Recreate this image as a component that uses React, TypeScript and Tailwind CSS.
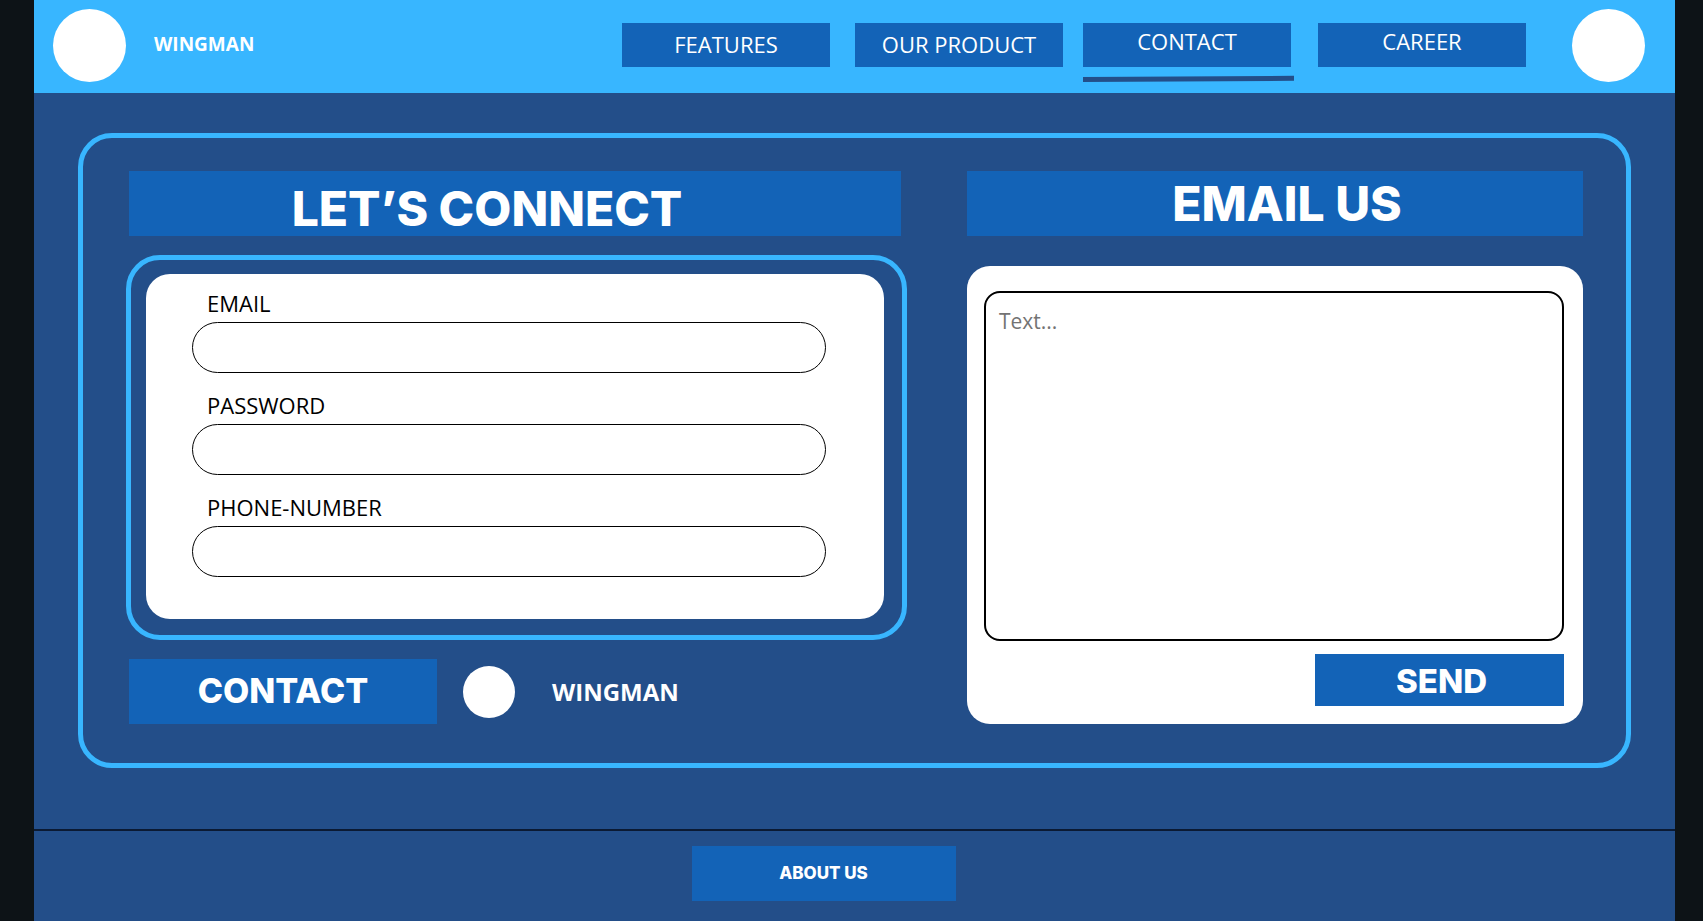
const navItem =
  "flex h-11 w-[208px] items-center justify-center bg-[#1363b7] text-[22px] leading-none text-white";
const fieldInput =
  "block h-[51px] w-full rounded-full border border-black bg-white px-5 text-[22px] text-black outline-none";
const fieldLabel = "mb-[7px] block pl-[15px] text-[22px] leading-6 text-black";
const heading = "font-['Inter',sans-serif] font-extrabold text-white";

function Header() {
  return (
    <header className="flex h-[93px] items-center bg-[#38b6ff] pr-[30px] pb-0.5 pl-[19px]">
      <span className="size-[73px] shrink-0 rounded-full bg-white" />
      <span className="ml-7 pb-0.5 text-[19px] leading-none font-bold text-white">WINGMAN</span>
      <nav aria-label="Main" className="ml-auto flex pb-px">
        <a href="#features" className={`${navItem} pb-0.5`}>
          FEATURES
        </a>
        <a href="#product" className={`${navItem} ml-[25px] pb-0.5`}>
          OUR PRODUCT
        </a>
        <a href="#contact" aria-current="page" className={`${navItem} relative ml-5 pb-2`}>
          CONTACT
          <svg
            className="absolute top-full left-0 mt-2 h-2 w-[211px]"
            viewBox="0 0 211 8"
            aria-hidden="true"
          >
            <path d="M0 4.5 L211 3.3" stroke="#234e89" strokeWidth="5" fill="none" />
          </svg>
        </a>
        <a href="#career" className={`${navItem} ml-[27px] pb-2`}>
          CAREER
        </a>
      </nav>
      <button
        type="button"
        aria-label="Account"
        className="ml-[46px] size-[73px] shrink-0 rounded-full bg-white"
      />
    </header>
  );
}

function ConnectForm() {
  return (
    <form className="flex flex-col">
      <h1
        className={`${heading} mr-1.5 ml-[3px] flex h-[65px] items-center justify-center bg-[#1363b7] pt-2.5 pr-14 text-[48px] leading-none`}
      >
        LET’S CONNECT
      </h1>
      <div className="mt-[19px] rounded-[34px] border-[5px] border-[#38b6ff] pt-[14px] pr-[18px] pb-4 pl-[15px]">
        <div className="rounded-3xl bg-white pt-[17px] pr-[58px] pb-[42px] pl-[46px]">
          <div className="mb-5">
            <label htmlFor="email" className={fieldLabel}>
              EMAIL
            </label>
            <input id="email" type="email" className={fieldInput} />
          </div>
          <div className="mb-5">
            <label htmlFor="password" className={fieldLabel}>
              PASSWORD
            </label>
            <input id="password" type="password" className={fieldInput} />
          </div>
          <div>
            <label htmlFor="phone" className={fieldLabel}>
              PHONE-NUMBER
            </label>
            <input id="phone" type="tel" className={fieldInput} />
          </div>
        </div>
      </div>
      <div className="mt-[19px] ml-[3px] flex items-center">
        <button
          type="button"
          className={`${heading} h-[65px] w-[308px] bg-[#1363b7] pb-0.5 text-[34px] leading-none`}
        >
          CONTACT
        </button>
        <span className="ml-[26px] size-[52px] shrink-0 rounded-full bg-white" />
        <span className="ml-[37px] text-[24px] leading-none font-bold text-white">WINGMAN</span>
      </div>
    </form>
  );
}

function EmailForm() {
  return (
    <form className="flex flex-col">
      <h2
        className={`${heading} flex h-[65px] items-center justify-center bg-[#1363b7] pl-6 text-[48px] leading-none`}
      >
        EMAIL US
      </h2>
      <div className="mt-[30px] flex grow flex-col rounded-[23px] bg-white pt-[25px] pr-[19px] pb-[18px] pl-[17px]">
        <textarea
          aria-label="Message"
          placeholder="Text..."
          className="min-h-[349px] w-full grow resize-none rounded-2xl border-2 border-black bg-white px-[13px] py-[14px] text-[21px] leading-7 text-black outline-none placeholder:text-[#737373] placeholder:opacity-100"
        />
        <button
          type="submit"
          className={`${heading} mt-[13px] h-[52px] w-[249px] self-end bg-[#1363b7] pt-0.5 pl-1 text-[33px] leading-none`}
        >
          SEND
        </button>
      </div>
    </form>
  );
}

export default function App() {
  return (
    <div className="min-h-screen bg-[#0d1317] pr-7 pl-[34px] font-['Open_Sans',sans-serif]">
      <div className="flex min-h-screen flex-col bg-[#234e89]">
        <Header />
        <main className="mx-11 mt-10 mb-[61px] grid grid-cols-[781fr_616fr] gap-[60px] rounded-[34px] border-[5px] border-[#38b6ff] px-[43px] pt-[33px] pb-[39px]">
          <ConnectForm />
          <EmailForm />
        </main>
        <footer className="grow border-t-2 border-[#0b1a33] pt-[15px] pr-[62px] pb-5">
          <a
            href="#about"
            className={`${heading} mx-auto flex h-[55px] w-[264px] items-center justify-center bg-[#1363b7] text-[17px] leading-none`}
          >
            ABOUT US
          </a>
        </footer>
      </div>
    </div>
  );
}
